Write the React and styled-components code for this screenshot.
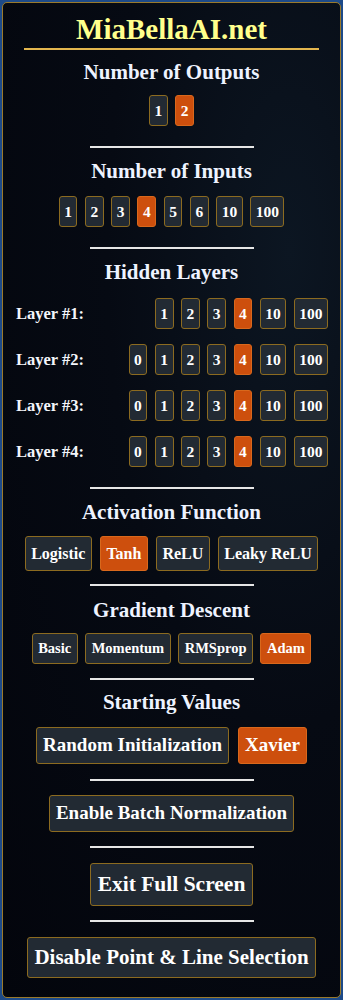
import React from 'react';
import styled, { createGlobalStyle } from 'styled-components';

const GlobalStyle = createGlobalStyle`
  html, body {
    margin: 0;
    padding: 0;
    background: #1d4a88;
  }
  body {
    font-family: 'Liberation Serif', 'Times New Roman', serif;
    font-weight: 700;
  }
`;

const Frame = styled.div`
  padding: 2px;
  width: 343px;
  box-sizing: border-box;
`;

const Panel = styled.div`
  box-sizing: border-box;
  height: 996px;
  border: 1px solid #9a7a2c;
  border-radius: 5px;
  background: radial-gradient(ellipse at 85% 25%, #0c1622 0%, #060a13 45%, #03050c 100%);
  display: flex;
  flex-direction: column;
  align-items: center;
  padding-top: 9px;
`;

const Title = styled.h1`
  margin: 0;
  font-size: 29px;
  line-height: 34px;
  color: #ffff8c;
  font-weight: 700;
`;

const GoldRule = styled.div`
  width: 295px;
  height: 2px;
  background: #e3b64e;
  margin: 2px 0 10px;
`;

const Heading = styled.h2`
  margin: 0 0 ${(p) => p.$below}px;
  font-size: 21px;
  line-height: 25px;
  color: #eef3ff;
  font-weight: 700;
`;

const Rule = styled.div`
  width: 164px;
  height: 2px;
  background: #e6e6e6;
  margin: ${(p) => p.$above}px 0 ${(p) => p.$below}px;
`;

const ButtonRow = styled.div`
  display: flex;
  justify-content: center;
  gap: ${(p) => p.$gap || 8}px;
`;

const sizes = {
  num: { font: 15.5, line: 17, pv: 6, ph: 4.5 },
  act: { font: 16, line: 19, pv: 7, ph: 5.5 },
  grad: { font: 14.5, line: 17, pv: 6, ph: 5.5 },
  start: { font: 19, line: 22, pv: 6.5, ph: 6 },
  big: { font: 21.5, line: 25, pv: 8, ph: 6.5 },
  wide: { font: 21, line: 25, pv: 7, ph: 6.5 },
};

const Btn = styled.button`
  font-family: 'Liberation Serif', 'Times New Roman', serif;
  font-weight: 700;
  font-size: ${(p) => sizes[p.$size].font}px;
  line-height: ${(p) => sizes[p.$size].line}px;
  padding: ${(p) => sizes[p.$size].pv}px ${(p) => sizes[p.$size].ph}px;
  color: #ffffff;
  background: ${(p) => (p.$active ? '#cd4f0d' : '#222a33')};
  border: 1px solid ${(p) => (p.$active ? '#d9681c' : '#8c6b20')};
  border-radius: 3px;
  margin: 0;
  cursor: pointer;
  white-space: nowrap;
`;

const LayerList = styled.div`
  align-self: stretch;
  display: flex;
  flex-direction: column;
  gap: 15px;
  padding: 0 12px 0 13px;
`;

const LayerRow = styled.div`
  display: flex;
  align-items: center;
  justify-content: space-between;
`;

const LayerLabel = styled.span`
  font-size: 16.5px;
  color: #f4f6fb;
`;

const LayerButtons = styled.div`
  display: flex;
  gap: 7.5px;
`;

const Group = ({ items, active, size, gap }) => (
  <ButtonRow $gap={gap}>
    {items.map((it) => (
      <Btn key={it} $size={size} $active={it === active}>
        {it}
      </Btn>
    ))}
  </ButtonRow>
);

const layers = [
  ['1', '2', '3', '4', '10', '100'],
  ['0', '1', '2', '3', '4', '10', '100'],
  ['0', '1', '2', '3', '4', '10', '100'],
  ['0', '1', '2', '3', '4', '10', '100'],
];

export default function App() {
  return (
    <>
      <GlobalStyle />
      <Frame>
        <Panel>
          <Title>MiaBellaAI.net</Title>
          <GoldRule />

          <Heading $below={10}>Number of Outputs</Heading>
          <Group items={['1', '2']} active="2" size="num" gap={7.5} />

          <Rule $above={20} $below={11} />
          <Heading $below={11.5}>Number of Inputs</Heading>
          <Group items={['1', '2', '3', '4', '5', '6', '10', '100']} active="4" size="num" gap={7.5} />

          <Rule $above={20} $below={11} />
          <Heading $below={13.5}>Hidden Layers</Heading>
          <LayerList>
            {layers.map((opts, i) => (
              <LayerRow key={i}>
                <LayerLabel>Layer #{i + 1}:</LayerLabel>
                <LayerButtons>
                  {opts.map((o) => (
                    <Btn key={o} $size="num" $active={o === '4'}>
                      {o}
                    </Btn>
                  ))}
                </LayerButtons>
              </LayerRow>
            ))}
          </LayerList>

          <Rule $above={20} $below={11} />
          <Heading $below={10.5}>Activation Function</Heading>
          <Group items={['Logistic', 'Tanh', 'ReLU', 'Leaky ReLU']} active="Tanh" size="act" gap={8} />

          <Rule $above={13} $below={12.5} />
          <Heading $below={9.5}>Gradient Descent</Heading>
          <Group items={['Basic', 'Momentum', 'RMSprop', 'Adam']} active="Adam" size="grad" gap={7.5} />

          <Rule $above={14} $below={10.5} />
          <Heading $below={11.5}>Starting Values</Heading>
          <Group items={['Random Initialization', 'Xavier']} active="Xavier" size="start" gap={9} />

          <Rule $above={15} $below={14} />
          <Btn $size="start">Enable Batch Normalization</Btn>

          <Rule $above={14} $below={15} />
          <Btn $size="big">Exit Full Screen</Btn>

          <Rule $above={14} $below={15} />
          <Btn $size="wide">Disable Point &amp; Line Selection</Btn>
        </Panel>
      </Frame>
    </>
  );
}
